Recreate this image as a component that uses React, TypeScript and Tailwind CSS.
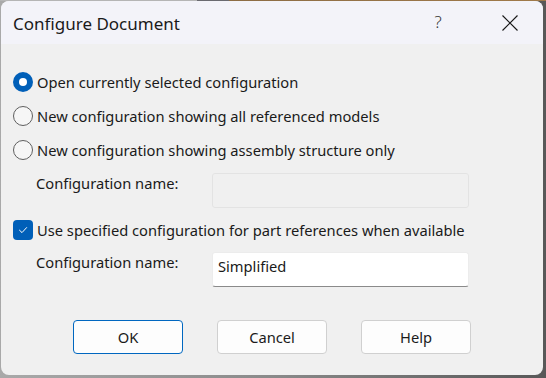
import React from "react";

const font = { fontFamily: '"Noto Sans", "Open Sans", Arial, sans-serif' };

function Radio({ checked }: { checked?: boolean }) {
  if (checked) {
    return (
      <div className="w-[20px] h-[20px] rounded-full bg-[#005fb8] flex items-center justify-center shrink-0">
        <div className="w-[8px] h-[8px] rounded-full bg-white" />
      </div>
    );
  }
  return <div className="w-[20px] h-[20px] rounded-full border border-[#5f5f5f] bg-[#f6f6f6] shrink-0" />;
}

function Checkbox() {
  return (
    <div className="w-[20px] h-[20px] rounded-[4px] bg-[#005fb8] flex items-center justify-center shrink-0">
      <svg width="12" height="12" viewBox="0 0 12 12">
        <path d="M2.5 6.2 L5 8.6 L9.6 3.6" fill="none" stroke="white" strokeWidth="1" strokeLinecap="round" strokeLinejoin="round" />
      </svg>
    </div>
  );
}

function Button({ label, primary }: { label: string; primary?: boolean }) {
  return (
    <div
      className={`w-[110px] h-[34px] rounded-[4px] bg-[#fdfdfd] border flex items-center justify-center text-[14.7px] text-[#1b1b1b] ${
        primary ? "border-[#0067c0]" : "border-[#d0d0d0]"
      }`}
    >
      {label}
    </div>
  );
}

export default function App() {
  return (
    <div
      className="w-[546px] h-[378px] overflow-hidden bg-[linear-gradient(to_right,#a9a9a9_0%,#8a8a8a_50%,#585858_100%)]"
      style={font}
    >
      <div className="h-[1px] w-full bg-[linear-gradient(to_right,#b5b5b5_0%,#b5b5b5_36%,#6a6a70_36%,#6a6a70_42%,#8c6c44_42%,#a07a4a_100%)]" />
      <div className="ml-[1px] w-[542px] h-[374px] rounded-[8px] overflow-hidden bg-[#f0f0f0] flex flex-col">
        <div className="h-[43px] bg-[#f3f3f9] flex items-center text-[#1a1a1a] shrink-0">
          <div className="pl-[12px] text-[17px] leading-none pt-[1px]">Configure Document</div>
          <div className="ml-auto w-[46px] text-center text-[17px] font-light text-[#333] mr-[26px] pb-[1px]">?</div>
          <div className="w-[46px] flex items-center justify-center mr-[10px]">
            <svg width="16" height="16" viewBox="0 0 16 16">
              <path d="M0.5 0.5 L15.5 15.5 M15.5 0.5 L0.5 15.5" stroke="#1a1a1a" strokeWidth="1.2" />
            </svg>
          </div>
        </div>
        <div className="flex flex-col pl-[12px] pt-[21px] text-[14.7px] text-[#1a1a1a]">
          <div className="h-[34px] flex items-center gap-[4px]">
            <Radio checked />
            <span>Open currently selected configuration</span>
          </div>
          <div className="h-[34px] flex items-center gap-[4px]">
            <Radio />
            <span>New configuration showing all referenced models</span>
          </div>
          <div className="h-[34px] flex items-center gap-[4px]">
            <Radio />
            <span>New configuration showing assembly structure only</span>
          </div>
          <div className="mt-[6px] h-[35px] flex items-start">
            <div className="ml-[23px] w-[176px] leading-[20px]">Configuration name:</div>
            <div className="w-[257px] h-[35px] bg-[#f0f0f0] border border-[#e3e3e3] rounded-[3px]" />
          </div>
          <div className="mt-[5px] h-[34px] flex items-center gap-[4px]">
            <Checkbox />
            <span>Use specified configuration for part references when available</span>
          </div>
          <div className="mt-[5px] h-[35px] flex items-start">
            <div className="ml-[23px] w-[176px] leading-[20px]">Configuration name:</div>
            <div className="w-[257px] h-[35px] bg-white border border-[#ececec] border-b-[#8a8a8a] rounded-[3px] flex items-center pl-[5px] pb-[6px]">
              Simplified
            </div>
          </div>
          <div className="mt-[33px] ml-[60px] flex gap-[34px]">
            <Button label="OK" primary />
            <Button label="Cancel" />
            <Button label="Help" />
          </div>
        </div>
      </div>
    </div>
  );
}
